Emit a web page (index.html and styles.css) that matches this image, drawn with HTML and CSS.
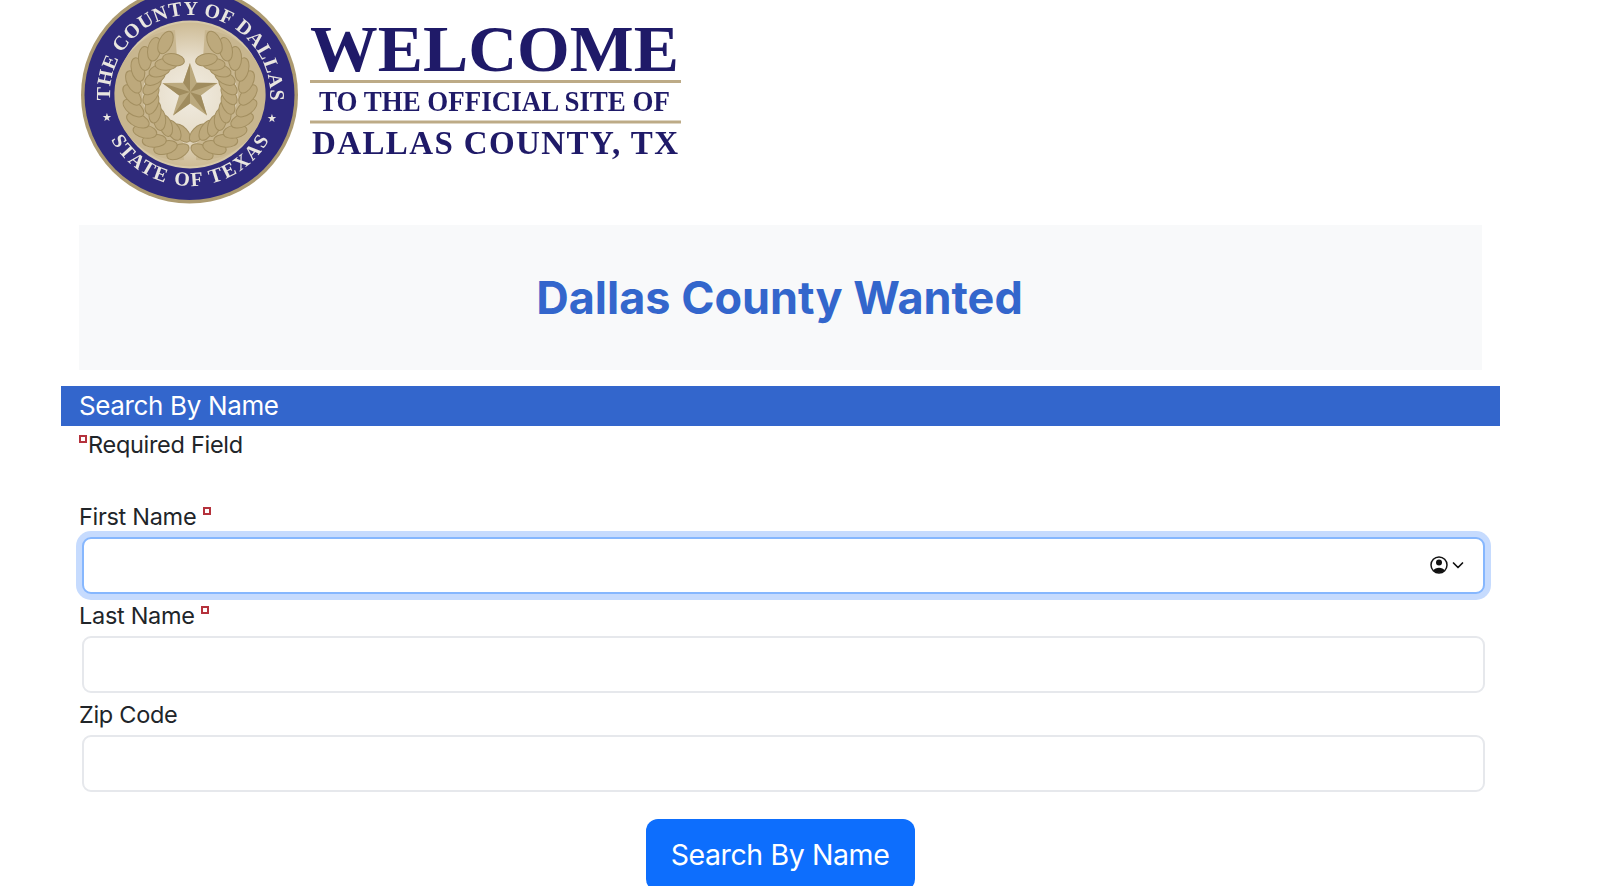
FILE: index.html
```html
<!DOCTYPE html>
<html lang="en">
<head>
<meta charset="utf-8">
<title>Dallas County Wanted</title>
<link rel="stylesheet" href="styles.css">
</head>
<body>
<main class="page">
  <div class="inner">
    <svg class="logo" viewBox="0 0 620 225" width="620" height="225" role="img" aria-label="Welcome to the official site of Dallas County, TX">
      <defs>
        <radialGradient id="core" cx="50%" cy="50%" r="50%">
          <stop offset="0" stop-color="#f1ece1"/>
          <stop offset="0.5" stop-color="#e8dfcd"/>
          <stop offset="1" stop-color="#cdbb95"/>
        </radialGradient>
        <path id="arcTop" d="M 111 175 A 80 80 0 1 1 111 15 A 80 80 0 1 1 111 175"/>
        <path id="arcBottom" d="M 20 95 A 91 91 0 0 0 202 95"/>
        <g id="pair">
          <ellipse cx="111" cy="37" rx="6.500" ry="12" transform="rotate(50 111 37)"/>
          <ellipse cx="111" cy="56" rx="6" ry="11" transform="rotate(125 111 56)"/>
        </g>
        <g id="branch" fill="#bda97c" stroke="#a38f60" stroke-width="1">
          <path d="M 97 44 A 51 51 0 0 0 104 146" fill="none" stroke="#c8b68f" stroke-width="28"/>
          <use href="#pair" transform="rotate(-168 111 95)"/>
          <use href="#pair" transform="rotate(-155 111 95)"/>
          <use href="#pair" transform="rotate(-142 111 95)"/>
          <use href="#pair" transform="rotate(-129 111 95)"/>
          <use href="#pair" transform="rotate(-116 111 95)"/>
          <use href="#pair" transform="rotate(-103 111 95)"/>
          <use href="#pair" transform="rotate(-90 111 95)"/>
          <use href="#pair" transform="rotate(-77 111 95)"/>
          <use href="#pair" transform="rotate(-64 111 95)"/>
          <use href="#pair" transform="rotate(-51 111 95)"/>
          <use href="#pair" transform="rotate(-38 111 95)"/>
          <use href="#pair" transform="rotate(-25 111 95)"/>
        </g>
      </defs>
      <g class="soft">
        <circle cx="110.500" cy="95" r="108.500" fill="#ac9a70"/>
        <circle cx="110.500" cy="95" r="105" fill="#2f2a7c"/>
        <circle cx="111" cy="94.500" r="74" fill="#d6c8a8"/>
        <circle cx="111" cy="94.500" r="72" fill="url(#core)"/>
        <use href="#branch"/>
        <use href="#branch" transform="matrix(-1 0 0 1 222 0)"/>
        <polygon points="111,63 117.800,82.700 138.600,83 121.900,95.600 128,115.500 111,103.500 94,115.500 100.100,95.600 83.400,83 104.200,82.700" fill="#bba97e"/>
        <polygon points="111,63 111,92 104.200,82.700" fill="#a08c5e"/>
        <polygon points="138.600,83 111,92 117.800,82.700" fill="#a08c5e"/>
        <polygon points="128,115.500 111,92 121.900,95.600" fill="#a08c5e"/>
        <polygon points="94,115.500 111,92 111,103.500" fill="#a08c5e"/>
        <polygon points="83.400,83 111,92 100.100,95.600" fill="#a08c5e"/>
        <text class="ring-text"><textPath href="#arcTop" startOffset="50%" text-anchor="middle" textLength="262">THE COUNTY OF DALLAS</textPath></text>
        <text class="ring-text"><textPath href="#arcBottom" startOffset="50%" text-anchor="middle" textLength="192">STATE OF TEXAS</textPath></text>
        <text class="ring-star" x="28" y="121" text-anchor="middle">★</text>
        <text class="ring-star" x="193" y="122" text-anchor="middle">★</text>
        <text class="wordmark w1" x="231" y="71" textLength="369" lengthAdjust="spacingAndGlyphs">WELCOME</text>
        <rect class="rule" x="231" y="80" width="371" height="3"/>
        <text class="wordmark w2" x="240" y="111" textLength="351" lengthAdjust="spacingAndGlyphs">TO THE OFFICIAL SITE OF</text>
        <rect class="rule" x="231" y="120.500" width="371" height="3"/>
        <text class="wordmark w3" x="233" y="154" textLength="366" lengthAdjust="spacing">DALLAS COUNTY, TX</text>
      </g>
    </svg>
    <header class="jumbo"><h1 class="title">Dallas County Wanted</h1></header>
  </div>

  <h2 class="bar">Search By Name</h2>

  <form class="inner form">
    <p class="legend"><span class="req req-legend"></span>Required Field</p>

    <div class="field">
      <label class="label" for="first">First Name <span class="req"></span></label>
      <div class="control">
        <input class="input input-focus" id="first" type="text">
        <svg class="autofill" viewBox="0 0 36 20" width="36" height="20" aria-hidden="true">
          <circle cx="10" cy="10" r="8" fill="none" stroke="#111" stroke-width="1.500"/>
          <circle cx="10" cy="7.500" r="3" fill="#111"/>
          <path d="M4.500 15.500 C6 11.800 14 11.800 15.500 15.500 A8 8 0 0 1 4.500 15.500 Z" fill="#111"/>
          <path d="M24.500 8 L29 12.500 L33.500 8" fill="none" stroke="#111" stroke-width="1.700" stroke-linecap="round" stroke-linejoin="round"/>
        </svg>
      </div>
    </div>

    <div class="field">
      <label class="label" for="last">Last Name <span class="req"></span></label>
      <div class="control"><input class="input" id="last" type="text"></div>
    </div>

    <div class="field">
      <label class="label" for="zip">Zip Code</label>
      <div class="control"><input class="input" id="zip" type="text"></div>
    </div>

    <div class="actions"><button class="btn" type="button">Search By Name</button></div>
  </form>
</main>
</body>
</html>
```

FILE: styles.css
```css
html, body {
  margin: 0;
  height: 886px;
  overflow: hidden;
  background: #fff;
}
body {
  font-family: Inter, "Liberation Sans", sans-serif;
  color: #212529;
}
.page {
  width: 1439px;
  margin-left: 61px;
}
.inner {
  display: block;
  padding: 0 18px;
}
.logo {
  display: block;
}
.soft {
  filter: blur(0.5px);
}
.ring-text {
  font-family: "Liberation Serif", serif;
  font-weight: 700;
  font-size: 20px;
  fill: #e9e6e0;
}
.ring-star {
  font-family: "DejaVu Sans", sans-serif;
  font-size: 11px;
  fill: #e9e6e0;
}
.wordmark {
  font-family: "Liberation Serif", serif;
  font-weight: 700;
  fill: #1f1a68;
}
.w1 { font-size: 66px; }
.w2 { font-size: 30px; }
.w3 { font-size: 33px; }
.rule { fill: #bdab87; }
.jumbo {
  height: 145px;
  display: flex;
  align-items: center;
  justify-content: center;
  padding-right: 2px;
  box-sizing: border-box;
  background: #f8f9fa;
  margin: 0 0 16px;
}
.title {
  margin: 0;
  font-size: 45px;
  font-weight: 700;
  line-height: 1.2;
  color: #3366cc;
}
.bar {
  margin: 0;
  height: 40px;
  padding: 0 18px;
  background: #3366cc;
  color: #fff;
  font-size: 26px;
  font-weight: 400;
  line-height: 40px;
  letter-spacing: -0.36px;
}
.form {
  margin: 0;
}
.legend {
  margin: 0 0 29px;
  height: 40px;
  font-size: 23.5px;
  letter-spacing: -0.3px;
  line-height: 38px;
}
.req {
  display: inline-block;
  width: 8px;
  height: 8px;
  box-sizing: border-box;
  border: 2px solid #b5323c;
  vertical-align: 10px;
}
.req-legend {
  margin-right: 1px;
}
.label {
  display: block;
  height: 42px;
  font-size: 23.5px;
  letter-spacing: -0.3px;
  line-height: 44px;
}
.control {
  position: relative;
  padding-left: 3px;
  margin-right: -3px;
}
.input {
  display: block;
  box-sizing: border-box;
  width: 100%;
  height: 57px;
  padding: 0 16px;
  border: 2px solid #e6e8ec;
  border-radius: 9px;
  background: #fff;
  font: inherit;
  outline: none;
}
.input-focus {
  border-color: #86b7fe;
  box-shadow: 0 0 0 6px #c6dbfe;
}
.autofill {
  position: absolute;
  right: 20px;
  top: 18px;
}
.actions {
  display: flex;
  justify-content: center;
  padding-right: 1px;
  margin-top: 27px;
}
.btn {
  width: 269px;
  height: 72px;
  border: 0;
  border-radius: 12px;
  background: #0d6efd;
  color: #fff;
  font: inherit;
  font-size: 28.5px;
  letter-spacing: -0.4px;
  line-height: 72px;
  padding: 0;
}
```
